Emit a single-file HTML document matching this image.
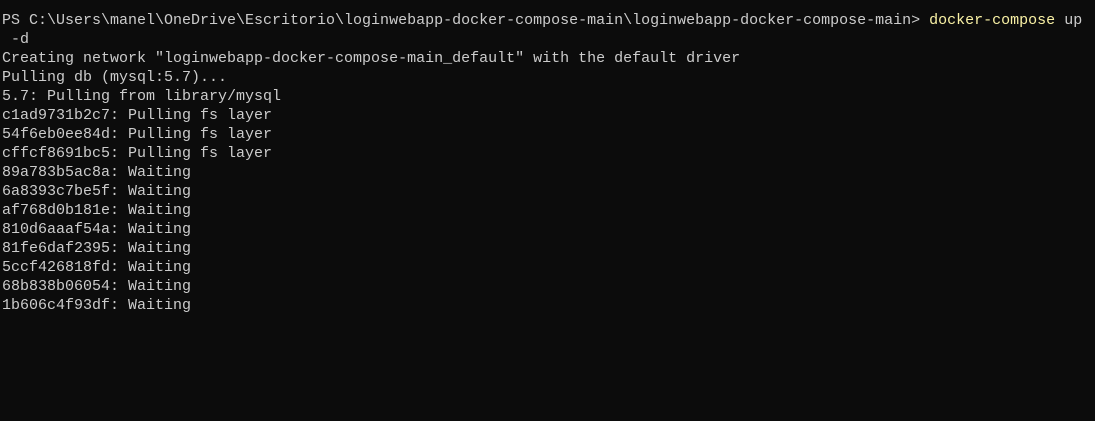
<!DOCTYPE html>
<html><head><style>
html,body{margin:0;padding:0;background:#0c0c0c;width:1095px;height:421px;overflow:hidden}
pre{margin:0;position:absolute;left:2px;top:11px;font-family:"Liberation Mono",monospace;font-size:15px;line-height:19px;color:#cccccc;white-space:pre}
.y{color:#f9f1a5}
</style></head><body>
<pre>PS C:\Users\manel\OneDrive\Escritorio\loginwebapp-docker-compose-main\loginwebapp-docker-compose-main&gt; <span class="y">docker-compose</span> up
 -d
Creating network "loginwebapp-docker-compose-main_default" with the default driver
Pulling db (mysql:5.7)...
5.7: Pulling from library/mysql
c1ad9731b2c7: Pulling fs layer
54f6eb0ee84d: Pulling fs layer
cffcf8691bc5: Pulling fs layer
89a783b5ac8a: Waiting
6a8393c7be5f: Waiting
af768d0b181e: Waiting
810d6aaaf54a: Waiting
81fe6daf2395: Waiting
5ccf426818fd: Waiting
68b838b06054: Waiting
1b606c4f93df: Waiting</pre>
</body></html>
